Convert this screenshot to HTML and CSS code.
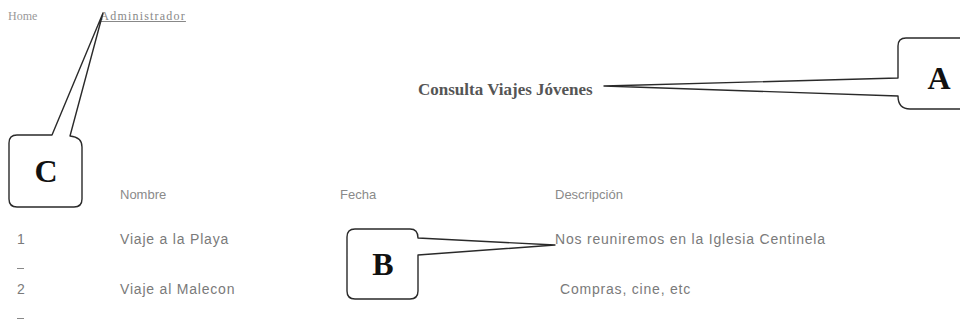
FILE: index.html
```html
<!DOCTYPE html>
<html lang="es">
<head>
<meta charset="utf-8">
<title>Consulta Viajes Jóvenes</title>
<link rel="stylesheet" href="styles.css">
</head>
<body>
<div class="page">
  <nav class="nav">
    <a class="nav-item">Home</a>
    <a class="nav-item nav-link">Administrador</a>
  </nav>
  <h1 class="title">Consulta Viajes Jóvenes</h1>
  <div class="table">
    <div class="cell num"></div>
    <div class="cell head">Nombre</div>
    <div class="cell head">Fecha</div>
    <div class="cell head">Descripción</div>

    <div class="cell num"><span>1</span><span class="dash"></span></div>
    <div class="cell">Viaje a la Playa</div>
    <div class="cell"></div>
    <div class="cell">Nos reuniremos en la Iglesia Centinela</div>

    <div class="cell num"><span>2</span><span class="dash"></span></div>
    <div class="cell">Viaje al Malecon</div>
    <div class="cell"></div>
    <div class="cell desc2">Compras, cine, etc</div>
  </div>

  <svg class="callouts" width="960" height="330" viewBox="0 0 960 330">
    <g class="outline">
      <path d="M962,38 H906 Q898,38 898,46 V78 L604,86 L898,96 Q898,109 910,109 H962"/>
      <path d="M17,135 H52 L103,13 L70,136 Q82,137 82,147 V199 Q82,207 74,207 H17 Q9,207 9,199 V143 Q9,135 17,135 Z"/>
      <path d="M355,229 H410 Q418,229 418,238 L555,245 L418,255 V291 Q418,299 410,299 H355 Q347,299 347,291 V237 Q347,229 355,229 Z"/>
    </g>
    <text class="letter" x="939" y="89">A</text>
    <text class="letter" x="46" y="182">C</text>
    <text class="letter" x="383" y="275">B</text>
  </svg>
</div>
</body>
</html>
```
FILE: styles.css
```css
html, body {
  margin: 0;
  padding: 0;
  background: #fff;
}

.page {
  position: relative;
  width: 960px;
  height: 330px;
  overflow: hidden;
  font-family: "Liberation Sans", Arial, sans-serif;
}

.nav {
  display: flex;
  gap: 63px;
  padding: 9px 0 0 8px;
  font-family: "Liberation Serif", "Times New Roman", serif;
  font-size: 12px;
  color: #999;
  line-height: 14px;
}

.nav-link {
  text-decoration: underline;
  color: #888;
  letter-spacing: 1.2px;
}

.title {
  margin: 0;
  padding: 57px 0 0 418px;
  font-family: "Liberation Serif", "Times New Roman", serif;
  font-size: 17px;
  font-weight: bold;
  line-height: 20px;
  color: #555;
}

.table {
  display: grid;
  grid-template-columns: 103px 220px 215px 1fr;
  grid-template-rows: 44px 50px 40px;
  padding: 87px 0 0 17px;
  font-size: 14px;
  letter-spacing: 0.8px;
  color: #7a7a7a;
  line-height: 16px;
}

.cell {
  white-space: nowrap;
}

.head {
  font-size: 13px;
  letter-spacing: 0;
  color: #8a8a8a;
}

.num {
  display: flex;
  flex-direction: column;
  gap: 21px;
}

.dash {
  width: 7px;
  height: 1px;
  background: #888;
}

.desc2 {
  padding-left: 5px;
}

.callouts {
  position: absolute;
  left: 0;
  top: 0;
  pointer-events: none;
}

.outline path {
  fill: none;
  stroke: #2a2a2a;
  stroke-width: 1.4;
  stroke-linejoin: round;
}

.letter {
  font-family: "Liberation Serif", "Times New Roman", serif;
  font-weight: bold;
  font-size: 32px;
  fill: #111;
  text-anchor: middle;
}
```
